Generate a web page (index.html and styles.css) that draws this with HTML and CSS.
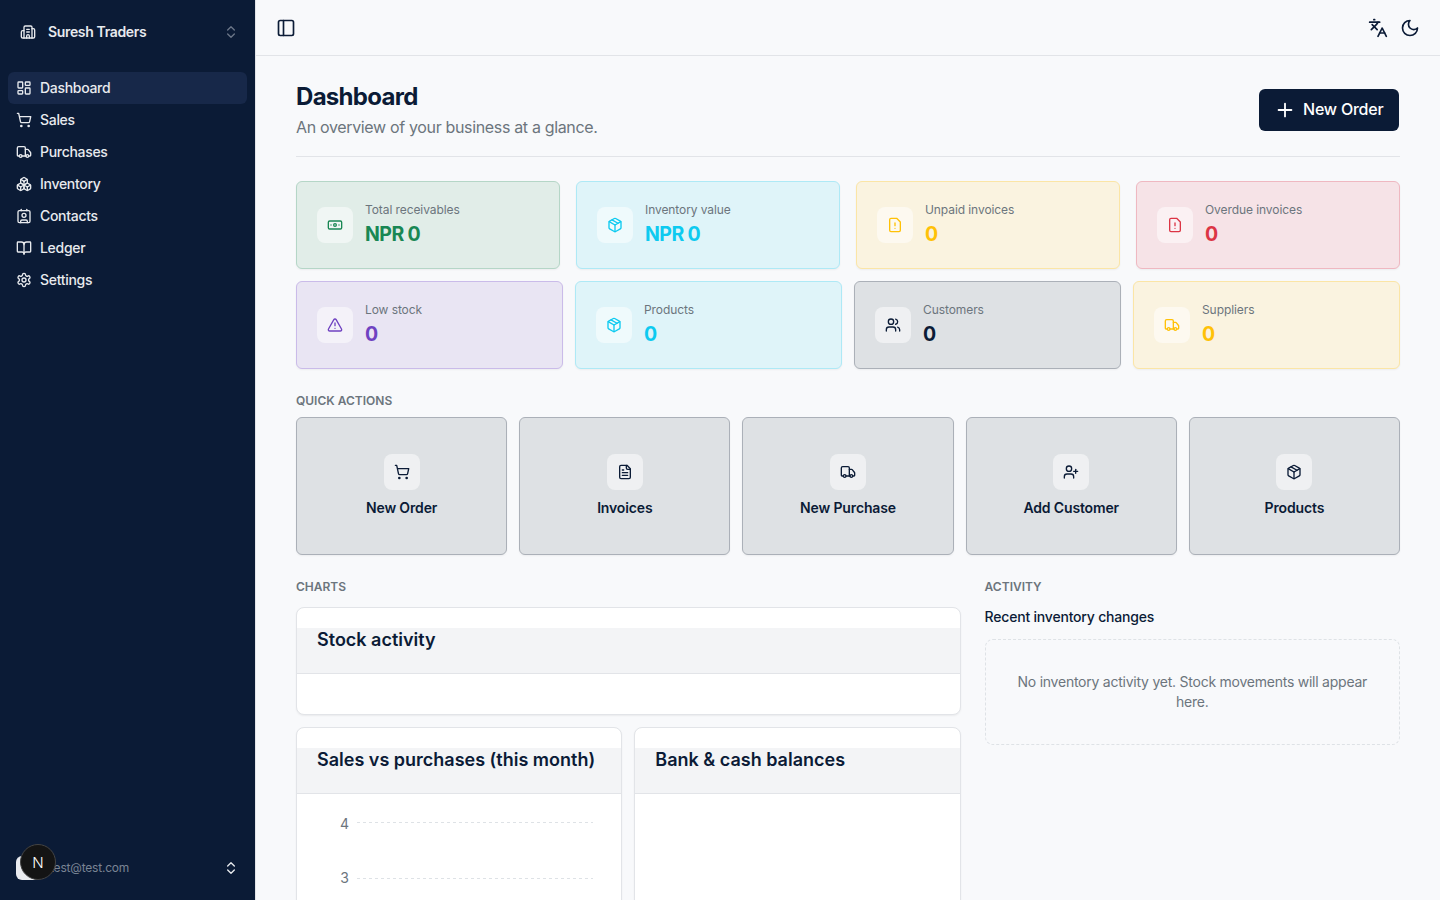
FILE: index.html
```html
<!DOCTYPE html>
<html lang="en">
<head>
    <meta charset="UTF-8">
    <meta name="viewport" content="width=device-width, initial-scale=1.0">
    <title>Dashboard - Suresh Traders</title>
    <link rel="stylesheet" href="styles.css">
</head>
<body>

<svg class="icon-defs" xmlns="http://www.w3.org/2000/svg">
    <symbol id="i-building" viewBox="0 0 24 24"><path d="M10 12h4"/><path d="M10 8h4"/><path d="M14 21v-3a2 2 0 0 0-4 0v3"/><path d="M6 10H4a2 2 0 0 0-2 2v7a2 2 0 0 0 2 2h16a2 2 0 0 0 2-2V9a2 2 0 0 0-2-2h-2"/><path d="M6 21V5a2 2 0 0 1 2-2h8a2 2 0 0 1 2 2v16"/></symbol>
    <symbol id="i-updown" viewBox="0 0 24 24"><path d="m7 15 5 5 5-5"/><path d="m7 9 5-5 5 5"/></symbol>
    <symbol id="i-dashboard" viewBox="0 0 24 24"><rect width="7" height="9" x="3" y="3" rx="1"/><rect width="7" height="5" x="14" y="3" rx="1"/><rect width="7" height="9" x="14" y="12" rx="1"/><rect width="7" height="5" x="3" y="16" rx="1"/></symbol>
    <symbol id="i-cart" viewBox="0 0 24 24"><circle cx="8" cy="21" r="1"/><circle cx="19" cy="21" r="1"/><path d="M2.05 2.05h2l2.66 12.42a2 2 0 0 0 2 1.58h9.78a2 2 0 0 0 1.95-1.57l1.65-7.43H5.12"/></symbol>
    <symbol id="i-truck" viewBox="0 0 24 24"><path d="M14 18V6a2 2 0 0 0-2-2H4a2 2 0 0 0-2 2v11a1 1 0 0 0 1 1h2"/><path d="M15 18H9"/><path d="M19 18h2a1 1 0 0 0 1-1v-3.65a1 1 0 0 0-.22-.624l-3.48-4.35A1 1 0 0 0 17.52 8H14"/><circle cx="17" cy="18" r="2"/><circle cx="7" cy="18" r="2"/></symbol>
    <symbol id="i-boxes" viewBox="0 0 24 24"><path d="M2.97 12.92A2 2 0 0 0 2 14.63v3.24a2 2 0 0 0 .97 1.71l3 1.8a2 2 0 0 0 2.06 0L12 19v-5.5l-5-3-4.03 2.42Z"/><path d="m7 16.5-4.74-2.85"/><path d="m7 16.5 5-3"/><path d="M7 16.5v5.17"/><path d="M12 13.5V19l3.97 2.38a2 2 0 0 0 2.06 0l3-1.8a2 2 0 0 0 .97-1.71v-3.24a2 2 0 0 0-.97-1.71L17 10.5l-5 3Z"/><path d="m17 16.5-5-3"/><path d="m17 16.5 4.74-2.85"/><path d="M17 16.5v5.17"/><path d="M7.97 4.42A2 2 0 0 0 7 6.13v4.37l5 3 5-3V6.13a2 2 0 0 0-.97-1.71l-3-1.8a2 2 0 0 0-2.06 0l-3 1.8Z"/><path d="M12 8 7.26 5.15"/><path d="m12 8 4.74-2.85"/><path d="M12 13.5V8"/></symbol>
    <symbol id="i-contact" viewBox="0 0 24 24"><path d="M16 2v2"/><path d="M7 22v-2a2 2 0 0 1 2-2h6a2 2 0 0 1 2 2v2"/><path d="M8 2v2"/><circle cx="12" cy="11" r="3"/><rect x="3" y="4" width="18" height="18" rx="2"/></symbol>
    <symbol id="i-book" viewBox="0 0 24 24"><path d="M12 7v14"/><path d="M3 18a1 1 0 0 1-1-1V4a1 1 0 0 1 1-1h5a4 4 0 0 1 4 4 4 4 0 0 1 4-4h5a1 1 0 0 1 1 1v13a1 1 0 0 1-1 1h-6a3 3 0 0 0-3 3 3 3 0 0 0-3-3z"/></symbol>
    <symbol id="i-settings" viewBox="0 0 24 24"><path d="M12.22 2h-.44a2 2 0 0 0-2 2v.18a2 2 0 0 1-1 1.73l-.43.25a2 2 0 0 1-2 0l-.15-.08a2 2 0 0 0-2.73.73l-.22.38a2 2 0 0 0 .73 2.73l.15.1a2 2 0 0 1 1 1.72v.51a2 2 0 0 1-1 1.74l-.15.09a2 2 0 0 0-.73 2.73l.22.38a2 2 0 0 0 2.73.73l.15-.08a2 2 0 0 1 2 0l.43.25a2 2 0 0 1 1 1.73V20a2 2 0 0 0 2 2h.44a2 2 0 0 0 2-2v-.18a2 2 0 0 1 1-1.73l.43-.25a2 2 0 0 1 2 0l.15.08a2 2 0 0 0 2.73-.73l.22-.39a2 2 0 0 0-.73-2.73l-.15-.08a2 2 0 0 1-1-1.74v-.5a2 2 0 0 1 1-1.74l.15-.09a2 2 0 0 0 .73-2.73l-.22-.38a2 2 0 0 0-2.73-.73l-.15.08a2 2 0 0 1-2 0l-.43-.25a2 2 0 0 1-1-1.73V4a2 2 0 0 0-2-2z"/><circle cx="12" cy="12" r="3"/></symbol>
    <symbol id="i-panel" viewBox="0 0 24 24"><rect width="18" height="18" x="3" y="3" rx="2"/><path d="M9 3v18"/></symbol>
    <symbol id="i-languages" viewBox="0 0 24 24"><path d="m5 8 6 6"/><path d="m4 14 6-6 2-3"/><path d="M2 5h12"/><path d="M7 2h1"/><path d="m22 22-5-10-5 10"/><path d="M14 18h6"/></symbol>
    <symbol id="i-moon" viewBox="0 0 24 24"><path d="M12 3a6 6 0 0 0 9 9 9 9 0 1 1-9-9Z"/></symbol>
    <symbol id="i-plus" viewBox="0 0 24 24"><path d="M5 12h14"/><path d="M12 5v14"/></symbol>
    <symbol id="i-banknote" viewBox="0 0 24 24"><rect width="20" height="12" x="2" y="6" rx="2"/><circle cx="12" cy="12" r="2"/><path d="M6 12h.01"/><path d="M18 12h.01"/></symbol>
    <symbol id="i-package" viewBox="0 0 24 24"><path d="M11 21.73a2 2 0 0 0 2 0l7-4A2 2 0 0 0 21 16V8a2 2 0 0 0-1-1.73l-7-4a2 2 0 0 0-2 0l-7 4A2 2 0 0 0 3 8v8a2 2 0 0 0 1 1.73z"/><path d="M12 22V12"/><path d="M3.29 7 12 12l8.71-5"/><path d="m7.5 4.27 9 5.15"/></symbol>
    <symbol id="i-filewarn" viewBox="0 0 24 24"><path d="M14.5 2H6a2 2 0 0 0-2 2v16a2 2 0 0 0 2 2h12a2 2 0 0 0 2-2V7.5L14.5 2z"/><path d="M12 9v4"/><path d="M12 17h.01"/></symbol>
    <symbol id="i-triangle" viewBox="0 0 24 24"><path d="m21.73 18-8-14a2 2 0 0 0-3.48 0l-8 14A2 2 0 0 0 4 21h16a2 2 0 0 0 1.73-3"/><path d="M12 9v4"/><path d="M12 17h.01"/></symbol>
    <symbol id="i-users" viewBox="0 0 24 24"><path d="M16 21v-2a4 4 0 0 0-4-4H6a4 4 0 0 0-4 4v2"/><circle cx="9" cy="7" r="4"/><path d="M22 21v-2a4 4 0 0 0-3-3.87"/><path d="M16 3.13a4 4 0 0 1 0 7.75"/></symbol>
    <symbol id="i-filetext" viewBox="0 0 24 24"><path d="M15 2H6a2 2 0 0 0-2 2v16a2 2 0 0 0 2 2h12a2 2 0 0 0 2-2V7Z"/><path d="M14 2v4a2 2 0 0 0 2 2h4"/><path d="M10 9H8"/><path d="M16 13H8"/><path d="M16 17H8"/></symbol>
    <symbol id="i-userplus" viewBox="0 0 24 24"><path d="M16 21v-2a4 4 0 0 0-4-4H6a4 4 0 0 0-4 4v2"/><circle cx="9" cy="7" r="4"/><path d="M19 8v6"/><path d="M22 11h-6"/></symbol>
</svg>

<div class="app">
    <aside class="sidebar">
        <div class="brand">
            <svg class="icon"><use href="#i-building"/></svg>
            <span class="brand-name">Suresh Traders</span>
            <svg class="icon chevrons"><use href="#i-updown"/></svg>
        </div>
        <nav class="nav">
            <a class="nav-item active"><svg class="icon"><use href="#i-dashboard"/></svg><span>Dashboard</span></a>
            <a class="nav-item"><svg class="icon"><use href="#i-cart"/></svg><span>Sales</span></a>
            <a class="nav-item"><svg class="icon"><use href="#i-truck"/></svg><span>Purchases</span></a>
            <a class="nav-item"><svg class="icon"><use href="#i-boxes"/></svg><span>Inventory</span></a>
            <a class="nav-item"><svg class="icon"><use href="#i-contact"/></svg><span>Contacts</span></a>
            <a class="nav-item"><svg class="icon"><use href="#i-book"/></svg><span>Ledger</span></a>
            <a class="nav-item"><svg class="icon"><use href="#i-settings"/></svg><span>Settings</span></a>
        </nav>
        <div class="user-row">
            <div class="avatar"></div>
            <span class="user-email">test@test.com</span>
            <svg class="icon chevrons-light"><use href="#i-updown"/></svg>
        </div>
        <div class="dev-badge">N</div>
    </aside>

    <div class="main">
        <header class="topbar">
            <svg class="icon-lg"><use href="#i-panel"/></svg>
            <div class="topbar-right">
                <svg class="icon-lg"><use href="#i-languages"/></svg>
                <svg class="icon-lg"><use href="#i-moon"/></svg>
            </div>
        </header>

        <main class="content">
            <div class="page-head">
                <div>
                    <h1>Dashboard</h1>
                    <p class="subtitle">An overview of your business at a glance.</p>
                </div>
                <button type="button" class="btn-new"><svg class="icon-plus"><use href="#i-plus"/></svg><span>New Order</span></button>
            </div>

            <div class="stats stats-top">
                <div class="stat green">
                    <div class="tile"><svg class="icon"><use href="#i-banknote"/></svg></div>
                    <div><div class="stat-label">Total receivables</div><div class="stat-value">NPR 0</div></div>
                </div>
                <div class="stat cyan">
                    <div class="tile"><svg class="icon"><use href="#i-package"/></svg></div>
                    <div><div class="stat-label">Inventory value</div><div class="stat-value">NPR 0</div></div>
                </div>
                <div class="stat yellow">
                    <div class="tile"><svg class="icon"><use href="#i-filewarn"/></svg></div>
                    <div><div class="stat-label">Unpaid invoices</div><div class="stat-value">0</div></div>
                </div>
                <div class="stat red">
                    <div class="tile"><svg class="icon"><use href="#i-filewarn"/></svg></div>
                    <div><div class="stat-label">Overdue invoices</div><div class="stat-value">0</div></div>
                </div>
            </div>
            <div class="stats stats-bottom">
                <div class="stat purple">
                    <div class="tile"><svg class="icon"><use href="#i-triangle"/></svg></div>
                    <div><div class="stat-label">Low stock</div><div class="stat-value">0</div></div>
                </div>
                <div class="stat cyan">
                    <div class="tile"><svg class="icon"><use href="#i-package"/></svg></div>
                    <div><div class="stat-label">Products</div><div class="stat-value">0</div></div>
                </div>
                <div class="stat navy">
                    <div class="tile"><svg class="icon"><use href="#i-users"/></svg></div>
                    <div><div class="stat-label">Customers</div><div class="stat-value">0</div></div>
                </div>
                <div class="stat yellow">
                    <div class="tile"><svg class="icon"><use href="#i-truck"/></svg></div>
                    <div><div class="stat-label">Suppliers</div><div class="stat-value">0</div></div>
                </div>
            </div>

            <div class="section-label quick-label">Quick actions</div>
            <div class="actions">
                <a class="action"><div class="tile"><svg class="icon"><use href="#i-cart"/></svg></div>New Order</a>
                <a class="action"><div class="tile"><svg class="icon"><use href="#i-filetext"/></svg></div>Invoices</a>
                <a class="action"><div class="tile"><svg class="icon"><use href="#i-truck"/></svg></div>New Purchase</a>
                <a class="action"><div class="tile"><svg class="icon"><use href="#i-userplus"/></svg></div>Add Customer</a>
                <a class="action"><div class="tile"><svg class="icon"><use href="#i-package"/></svg></div>Products</a>
            </div>

            <div class="lower">
                <section>
                    <div class="section-label">Charts</div>
                    <div class="chart-card">
                        <div class="chart-head">Stock activity</div>
                        <div class="chart-body-empty"></div>
                    </div>
                    <div class="chart-pair">
                        <div class="chart-card">
                            <div class="chart-head">Sales vs purchases (this month)</div>
                            <svg class="axis" width="324" height="200">
                                <line x1="60" y1="28.5" x2="296" y2="28.5"/>
                                <line x1="60" y1="84.5" x2="296" y2="84.5"/>
                                <text x="52" y="35">4</text>
                                <text x="52" y="89">3</text>
                            </svg>
                        </div>
                        <div class="chart-card">
                            <div class="chart-head">Bank &amp; cash balances</div>
                            <div class="chart-body-tall"></div>
                        </div>
                    </div>
                </section>
                <section>
                    <div class="section-label">Activity</div>
                    <div class="activity-title">Recent inventory changes</div>
                    <div class="activity-empty">No inventory activity yet. Stock movements will appear here.</div>
                </section>
            </div>
        </main>
    </div>
</div>

</body>
</html>
```

FILE: styles.css
```css
* {
    box-sizing: border-box;
}
html, body {
    height: 100%;
    margin: 0;
    overflow: hidden;
}
body {
    font-family: Inter, "Noto Sans", sans-serif;
    background-color: #f8f9fb;
    color: #0b1b36;
}
.icon-defs {
    display: none;
}
.icon, .icon-lg, .icon-plus {
    width: 16px;
    height: 16px;
    flex: none;
    fill: none;
    stroke: currentColor;
    stroke-width: 2;
    stroke-linecap: round;
    stroke-linejoin: round;
}
.icon-lg {
    width: 20px;
    height: 20px;
}
.icon-plus {
    width: 22px;
    height: 22px;
}
.app {
    display: flex;
    height: 900px;
}

/* sidebar */
.sidebar {
    position: relative;
    width: 256px;
    flex: none;
    display: flex;
    flex-direction: column;
    background-color: #0b1b36;
    border-right: 1px solid #e2e4e8;
    color: #e8eaee;
}
.brand {
    height: 64px;
    display: flex;
    align-items: center;
    gap: 12px;
    padding: 0 16px 0 20px;
}
.brand-name {
    flex: 1;
    margin-bottom: 2px;
    font-size: 14px;
    font-weight: 600;
    letter-spacing: -0.35px;
}
.chevrons {
    color: #6c7688;
}
.chevrons-light {
    color: #e8eaee;
}
.nav {
    padding: 8px;
    display: flex;
    flex-direction: column;
}
.nav-item {
    height: 32px;
    display: flex;
    align-items: center;
    gap: 8px;
    padding: 0 8px;
    border-radius: 6px;
    font-size: 14px;
    font-weight: 500;
    letter-spacing: -0.3px;
}
.nav-item span {
    margin-bottom: 2px;
}
.nav-item.active {
    background-color: #172849;
}
.user-row {
    margin-top: auto;
    height: 24px;
    margin-bottom: 20px;
    display: flex;
    align-items: center;
    padding: 0 16px;
}
.avatar {
    width: 24px;
    height: 24px;
    border-radius: 6px;
    background-color: #e9ebef;
}
.user-email {
    flex: 1;
    margin-left: 10px;
    margin-bottom: 2px;
    font-size: 12px;
    letter-spacing: -0.2px;
    color: #7a8494;
}
.dev-badge {
    position: absolute;
    left: 20px;
    top: 844px;
    width: 36px;
    height: 36px;
    border-radius: 50%;
    background-color: #141414;
    border: 1px solid #444;
    color: #fff;
    font-size: 15px;
    font-weight: 300;
    display: flex;
    align-items: center;
    justify-content: center;
}

/* top bar */
.main {
    flex: 1;
    min-width: 0;
    display: flex;
    flex-direction: column;
}
.topbar {
    height: 56px;
    flex: none;
    display: flex;
    align-items: center;
    justify-content: space-between;
    padding: 0 20px;
    border-bottom: 1px solid #e2e4e8;
}
.topbar-right {
    display: flex;
    gap: 12px;
}
.content {
    padding: 24px 40px;
}

/* page heading */
.page-head {
    display: flex;
    justify-content: space-between;
    align-items: center;
    padding-bottom: 17px;
    margin-bottom: 24px;
    border-bottom: 1px solid #e2e4e8;
}
h1 {
    margin: 1px 0 0;
    font-size: 24px;
    line-height: 32px;
    font-weight: 700;
    letter-spacing: -0.7px;
}
.subtitle {
    margin: 2px 0 0;
    font-size: 16px;
    line-height: 24px;
    letter-spacing: -0.34px;
    color: #6c757d;
}
.btn-new {
    width: 140px;
    height: 42px;
    margin-right: 1px;
    display: flex;
    align-items: center;
    gap: 7px;
    padding: 0 0 0 15px;
    border: none;
    border-radius: 6px;
    background-color: #0b1b36;
    color: #fff;
    font-family: inherit;
    font-size: 16px;
    font-weight: 500;
    letter-spacing: -0.22px;
}
.btn-new span {
    margin-bottom: 2px;
}

/* stat cards */
.stats {
    display: grid;
    grid-template-columns: repeat(4, 1fr);
}
.stats-top {
    gap: 16px;
    margin-bottom: 12px;
}
.stats-bottom {
    gap: 12px;
}
.stat {
    height: 88px;
    display: flex;
    align-items: center;
    gap: 12px;
    padding: 0 20px;
    border: 1px solid;
    border-radius: 6px;
    box-shadow: 0 1px 2px rgba(0, 0, 0, 0.05);
}
.tile {
    width: 36px;
    height: 36px;
    flex: none;
    display: flex;
    align-items: center;
    justify-content: center;
    border-radius: 8px;
    background-color: rgba(255, 255, 255, 0.5);
}
.stat-label {
    font-size: 12px;
    line-height: 16px;
    letter-spacing: -0.08px;
    color: #6c757d;
}
.stat-value {
    margin-top: 2px;
    font-size: 19.5px;
    line-height: 28px;
    font-weight: 700;
    letter-spacing: -0.5px;
    word-spacing: -0.5px;
}
.green { background-color: #e1ede8; border-color: #b5d6c7; color: #198754; }
.cyan { background-color: #dff4f9; border-color: #aee9f6; color: #0dcaf0; }
.yellow { background-color: #faf3e0; border-color: #fbe5a6; color: #ffc107; }
.red { background-color: #f6e3e7; border-color: #efb8c1; color: #dc3545; }
.purple { background-color: #e9e5f3; border-color: #cabbe9; color: #6f42c1; }
.navy { background-color: #dee1e4; border-color: #abb0b8; color: #0b1b36; }

/* quick actions */
.section-label {
    font-size: 12px;
    line-height: 16px;
    font-weight: 600;
    text-transform: uppercase;
    color: #6c757d;
    margin-bottom: 12px;
}
.quick-label {
    margin-top: 24px;
    margin-bottom: 8px;
}
.actions {
    display: grid;
    grid-template-columns: repeat(5, 1fr);
    gap: 12px;
}
.action {
    height: 138px;
    display: flex;
    flex-direction: column;
    align-items: center;
    justify-content: center;
    gap: 8px;
    background-color: #dee1e4;
    border: 1px solid #abb0b8;
    border-radius: 6px;
    box-shadow: 0 1px 2px rgba(0, 0, 0, 0.05);
    font-size: 14px;
    line-height: 20px;
    font-weight: 600;
    letter-spacing: -0.15px;
}

/* charts + activity */
.lower {
    display: grid;
    grid-template-columns: 8fr 5fr;
    gap: 24px;
    margin-top: 24px;
}
.chart-card {
    padding-top: 20px;
    background-color: #fff;
    border: 1px solid #e2e4e8;
    border-radius: 8px;
    box-shadow: 0 1px 2px rgba(0, 0, 0, 0.06);
    overflow: hidden;
}
.chart-head {
    height: 46px;
    padding: 0 20px;
    background-color: #f3f4f6;
    border-bottom: 1px solid #e2e4e8;
    font-size: 18px;
    line-height: 24px;
    font-weight: 600;
}
.chart-body-empty {
    height: 40px;
}
.chart-body-tall {
    height: 200px;
}
.chart-pair {
    display: grid;
    grid-template-columns: 1fr 1fr;
    gap: 12px;
    margin-top: 12px;
}
.axis {
    display: block;
}
.axis line {
    stroke: #dee2e6;
    stroke-dasharray: 3 3;
}
.axis text {
    fill: #6c757d;
    font-size: 14px;
    text-anchor: end;
}
.activity-title {
    font-size: 14px;
    line-height: 20px;
    font-weight: 500;
    letter-spacing: -0.2px;
    margin-bottom: 12px;
}
.activity-empty {
    padding: 32px 24px;
    border: 1px dashed #dee2e6;
    border-radius: 8px;
    font-size: 14px;
    line-height: 20px;
    letter-spacing: -0.24px;
    text-align: center;
    color: #6c757d;
}
```
